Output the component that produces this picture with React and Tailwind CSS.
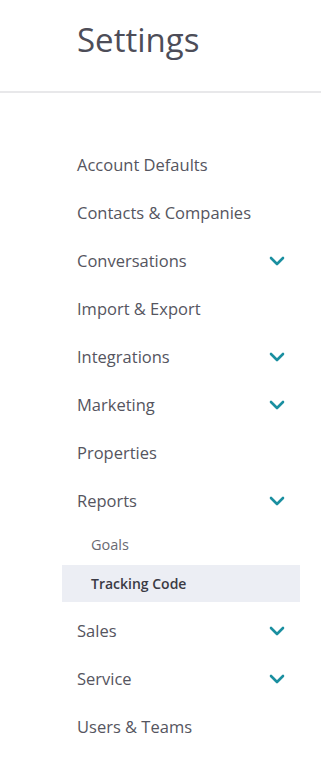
import React from "react";

const Chevron = () => (
  <svg width="16" height="10" viewBox="0 0 16 10" fill="none" className="shrink-0">
    <path d="M2 2 L8 8 L14 2" stroke="#1a8fa0" strokeWidth="2.6" strokeLinecap="round" strokeLinejoin="round" />
  </svg>
);

const Item = ({ label, chevron }) => (
  <div className="h-[48px] flex items-center justify-between pl-[77px] pr-[36px] text-[16.5px] text-[#555560]">
    <span>{label}</span>
    {chevron && <Chevron />}
  </div>
);

export default function App() {
  return (
    <div className="w-[321px] h-[759px] bg-white overflow-hidden" style={{ fontFamily: "'Open Sans', Lato, sans-serif" }}>
      <div className="h-[91px] pl-[77px] pt-[19px]">
        <h1 className="text-[33px] leading-[42px] text-[#4d4d58]">Settings</h1>
      </div>
      <div className="h-[2px] bg-[#e8e8ea]" />
      <div className="pt-[48px]">
        <Item label="Account Defaults" />
        <Item label="Contacts & Companies" />
        <Item label="Conversations" chevron />
        <Item label="Import & Export" />
        <Item label="Integrations" chevron />
        <Item label="Marketing" chevron />
        <Item label="Properties" />
        <Item label="Reports" chevron />
        <div className="h-[40px] flex items-center pl-[91px] text-[14.5px] text-[#6a6a72]">Goals</div>
        <div className="h-[37px] ml-[62px] mr-[21px] bg-[#eceef4] flex items-center pl-[29px] text-[14px] font-semibold text-[#3a3a44]">
          Tracking Code
        </div>
        <div className="h-[5px]" />
        <Item label="Sales" chevron />
        <Item label="Service" chevron />
        <Item label="Users & Teams" />
      </div>
    </div>
  );
}
